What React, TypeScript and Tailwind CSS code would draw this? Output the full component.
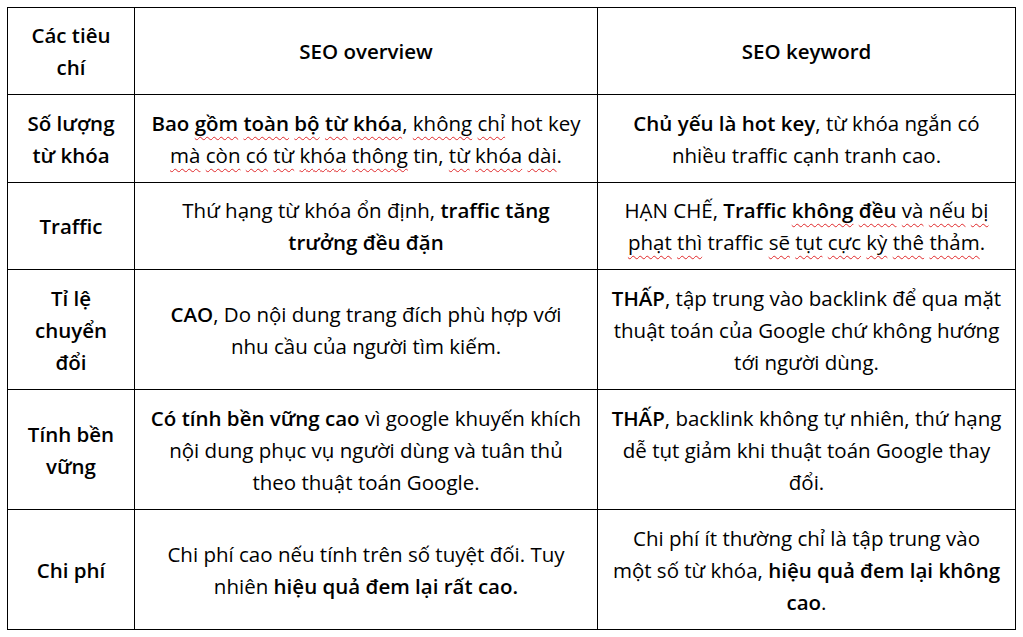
import React from 'react';

// spell-check style squiggle under a single word
const W: React.FC<{ children: React.ReactNode }> = ({ children }) => (
  <span className="underline decoration-wavy decoration-[#e0282a] decoration-1 underline-offset-[5px]">{children}</span>
);

const B: React.FC<{ children: React.ReactNode }> = ({ children }) => (
  <span className="font-semibold">{children}</span>
);

const cell = 'border border-black px-2 py-0 text-center align-middle';

export default function App() {
  return (
    <div className="w-[1023px] h-[637px] bg-white pl-[7px] pt-[7px] text-[20.5px] leading-[32px] text-black" style={{ fontFamily: '"Open Sans", "Noto Sans", sans-serif' }}>
      <table className="border-collapse table-fixed w-[1008px]">
        <colgroup>
          <col className="w-[127px]" />
          <col className="w-[463px]" />
          <col className="w-[418px]" />
        </colgroup>
        <tbody>
          <tr className="h-[87px]">
            <td className={`${cell} font-semibold`}>Các tiêu<br />chí</td>
            <td className={`${cell} font-semibold`}>SEO overview</td>
            <td className={`${cell} font-semibold`}>SEO keyword</td>
          </tr>
          <tr className="h-[88px]">
            <td className={`${cell} font-semibold`}>Số lượng<br />từ khóa</td>
            <td className={cell}>
              <B>Bao <W>gồm</W> <W>toàn</W> <W>bộ</W> <W>từ</W> <W>khóa</W></B>, <W>không</W> <W>chỉ</W> hot key
              <br />
              <W>mà</W> <W>còn</W> <W>có</W> <W>từ</W> <W>khóa</W> <W>thông</W> tin, <W>từ</W> <W>khóa</W> <W>dài</W>.
            </td>
            <td className={cell}>
              <B>Chủ yếu là hot key</B>, từ khóa ngắn có
              <br />
              nhiều traffic cạnh tranh cao.
            </td>
          </tr>
          <tr className="h-[87px]">
            <td className={`${cell} font-semibold`}>Traffic</td>
            <td className={cell}>
              Thứ hạng từ khóa ổn định, <B>traffic tăng</B>
              <br />
              <B>trưởng đều đặn</B>
            </td>
            <td className={cell}>
              HẠN CHẾ, <B>Traffic <W>không</W> <W>đều</W></B> <W>và</W> <W>nếu</W> <W>bị</W>
              <br />
              <W>phạt</W> <W>thì</W> traffic <W>sẽ</W> <W>tụt</W> <W>cực</W> <W>kỳ</W> <W>thê</W> <W>thảm</W>.
            </td>
          </tr>
          <tr className="h-[120px]">
            <td className={`${cell} font-semibold`}>Tỉ lệ<br />chuyển<br />đổi</td>
            <td className={cell}>
              <B>CAO</B>, Do nội dung trang đích phù hợp với
              <br />
              nhu cầu của người tìm kiếm.
            </td>
            <td className={cell}>
              <B>THẤP</B>, tập trung vào backlink để qua mặt
              <br />
              thuật toán của Google chứ không hướng
              <br />
              tới người dùng.
            </td>
          </tr>
          <tr className="h-[120px]">
            <td className={`${cell} font-semibold`}>Tính bền<br />vững</td>
            <td className={cell}>
              <B>Có tính bền vững cao</B> vì google khuyến khích
              <br />
              nội dung phục vụ người dùng và tuân thủ
              <br />
              theo thuật toán Google.
            </td>
            <td className={cell}>
              <B>THẤP</B>, backlink không tự nhiên, thứ hạng
              <br />
              dễ tụt giảm khi thuật toán Google thay
              <br />
              đổi.
            </td>
          </tr>
          <tr className="h-[120px]">
            <td className={`${cell} font-semibold`}>Chi phí</td>
            <td className={cell}>
              Chi phí cao nếu tính trên số tuyệt đối. Tuy
              <br />
              nhiên <B>hiệu quả đem lại rất cao.</B>
            </td>
            <td className={cell}>
              Chi phí ít thường chỉ là tập trung vào
              <br />
              một số từ khóa, <B>hiệu quả đem lại không</B>
              <br />
              <B>cao</B>.
            </td>
          </tr>
        </tbody>
      </table>
    </div>
  );
}
